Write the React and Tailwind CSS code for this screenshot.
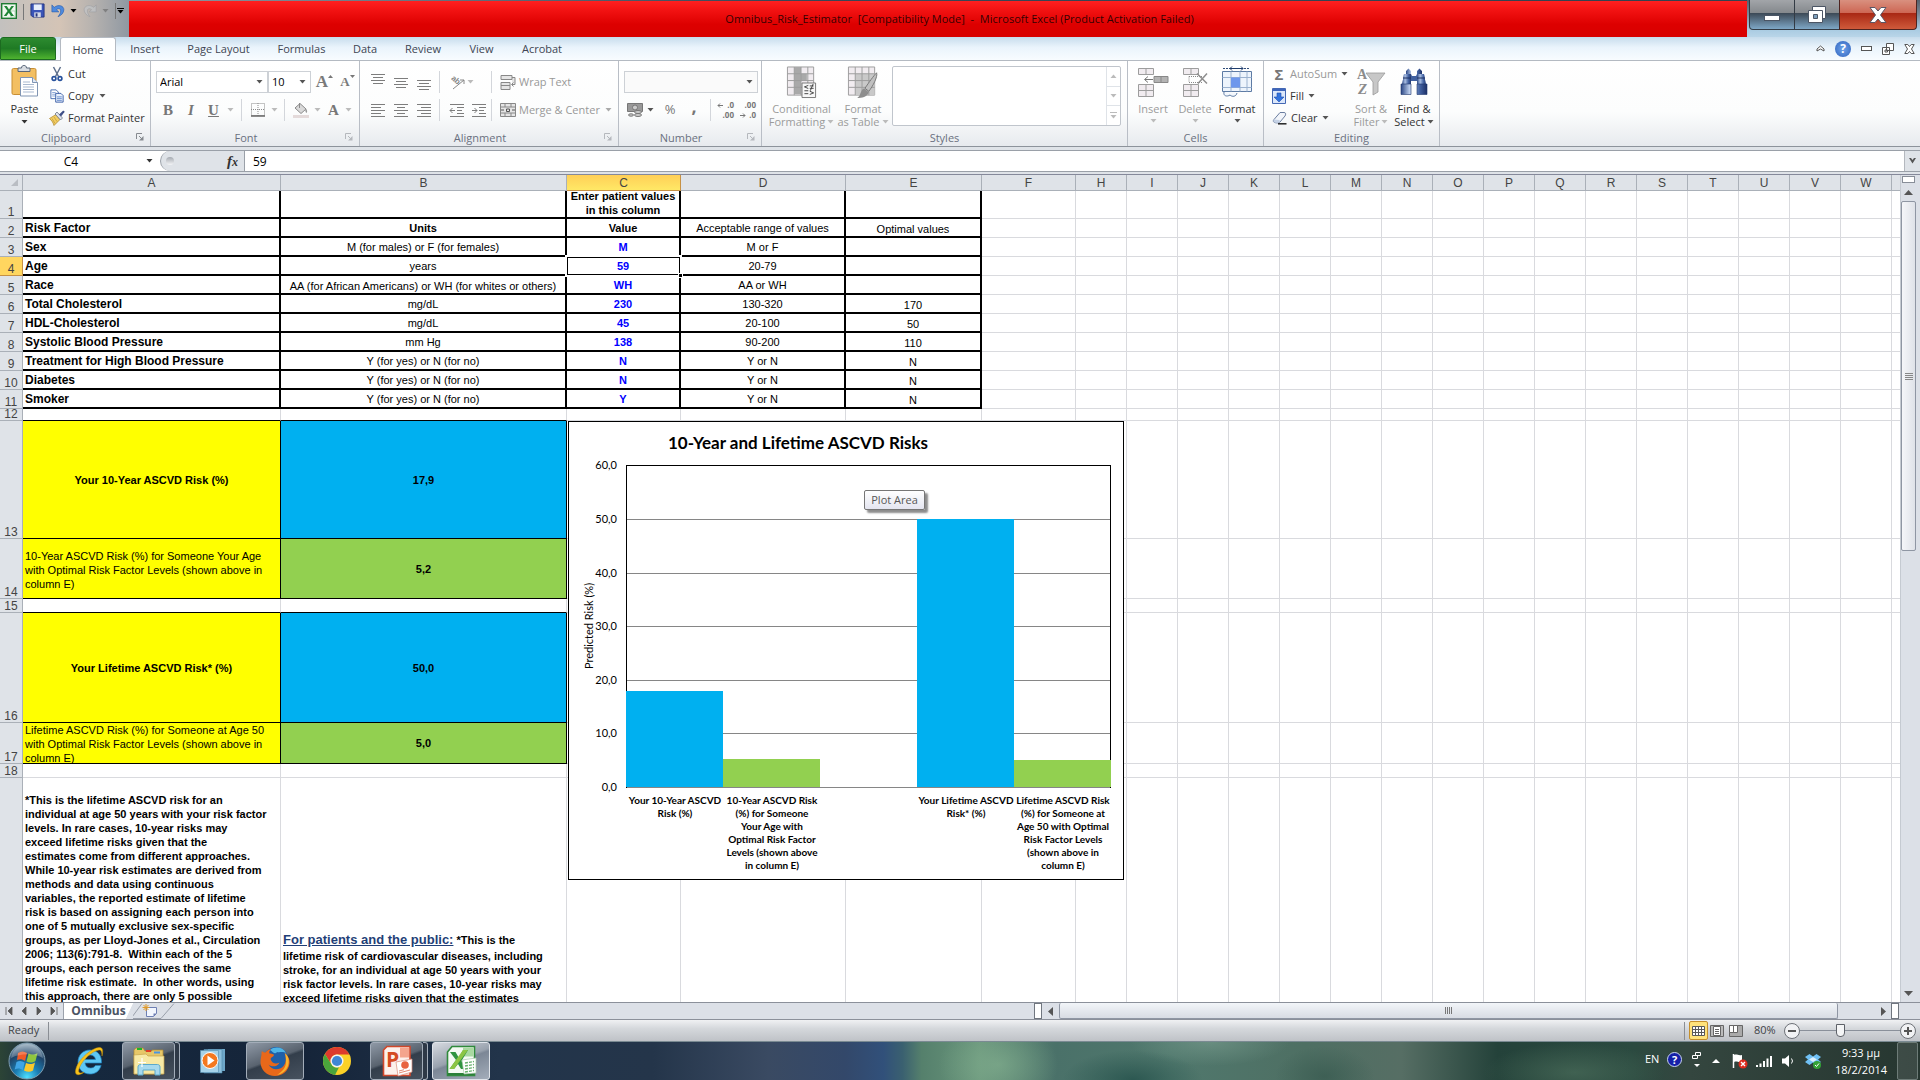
import React from "react";

const ui = "font-['Open_Sans','Noto_Sans',sans-serif]";
const arial = "font-['Liberation_Sans',Arial,sans-serif]";

/* ---------- small shared pieces ---------- */

function Caret({ className = "text-[#555]" }) {
  return (
    <svg viewBox="0 0 7 4" className={`h-1 w-[7px] shrink-0 ${className}`} fill="currentColor" aria-hidden="true">
      <path d="M0.5 0h6L3.5 3.6z" />
    </svg>
  );
}

function Launcher({ dim }) {
  return (
    <button aria-label="Open dialog" className={`absolute right-[6px] bottom-[5px] ${dim ? "text-[#b5b8bd]" : "text-[#85898f]"}`}>
      <svg viewBox="0 0 8 8" className="size-2" fill="none" stroke="currentColor">
        <path d="M0.5 6V0.5H6M3 3l3 3" />
        <path d="M7.5 3v4.5H3z" fill="currentColor" stroke="none" />
      </svg>
    </button>
  );
}

function Group({ label, width, launcher, dim, children }) {
  return (
    <section
      aria-label={label}
      className={`relative flex shrink-0 flex-col border-r border-[#b9bec6] ${width}`}
    >
      <div className="flex h-[68px]">{children}</div>
      <div className={`h-[17px] text-center text-[11px] leading-[17px] text-[#6a7080] ${launcher ? "pr-[18px]" : ""}`}>{label}</div>
      {launcher && <Launcher dim={dim} />}
    </section>
  );
}

function Divider() {
  return <span className="mx-1 h-[22px] w-px bg-[#d3d6db]" />;
}

function Lines({ rows, className = "" }) {
  return (
    <svg viewBox="0 0 16 16" className={`size-4 ${className}`} stroke="#7d7d7d" strokeWidth="1" aria-hidden="true">
      {rows.map(([x1, x2, y]) => (
        <path key={y} d={`M${x1} ${y + 0.5}H${x2}`} />
      ))}
    </svg>
  );
}

function IconButton({ label, children, className = "" }) {
  return (
    <button aria-label={label} title={label} className={`flex h-[22px] items-center justify-center ${className}`}>
      {children}
    </button>
  );
}

function BigButton({ icon, lines, dim, width, caretBelow }) {
  return (
    <button className={`flex flex-col items-center pt-[5px] text-[11px] leading-[13px] ${width} ${dim ? "text-[#9b9b9b]" : "text-[#333]"}`}>
      <span className="flex h-8 items-center justify-center">{icon}</span>
      <span className="mt-1 whitespace-nowrap">{lines[0]}</span>
      {caretBelow ? (
        <Caret className={`mt-1 ${dim ? "text-[#bbb]" : "text-[#555]"}`} />
      ) : (
        <span className="flex items-center gap-[2px] whitespace-nowrap">
          {lines[1]}
          <Caret className={dim ? "text-[#bbb]" : "text-[#555]"} />
        </span>
      )}
    </button>
  );
}

/* ---------- icons ---------- */

function ExcelLogo({ className }) {
  return (
    <svg viewBox="0 0 32 32" className={className} aria-hidden="true">
      <path d="M7 1.5h22.5v29H2.5V7z" fill="#f4faf3" stroke="#2f8a3c" strokeWidth="1.6" />
      <path d="M18 2.5h10.5v9H18z" fill="#a8d9a0" />
      <path d="M3 29h26" stroke="#2b7f38" strokeWidth="2" />
      <path d="M5 7h5.500l3.500 6 4-8h5l-6.500 11 5.500 8h-6l-3-5-4 5H4.500L11 15z" fill="#2f9440" />
      <path d="M18 5h5L9 24H4.500z" fill="#8cc544" />
      <path d="M17 15l14-2v15l-12 1z" fill="#fff" stroke="#a9c9ac" strokeWidth=".7" />
      <path d="M20 18l9-1.500M20 21l9-1.500M20 24l9-1.500M20 27l9-1.500" stroke="#66b06c" strokeWidth="1.300" strokeDasharray="3 1" />
    </svg>
  );
}

function SmallExcel() {
  return (
    <svg viewBox="0 0 16 16" className="size-4" aria-hidden="true">
      <rect x=".7" y=".7" width="14.600" height="14.600" fill="#eef7ee" stroke="#1e7b33" strokeWidth="1.400" />
      <path d="M10 8h4v6h-4z" fill="#fff" stroke="#8fc393" strokeWidth=".6" />
      <path d="M3 3h2.800L8 6.500 10.500 3H13L9.300 8 13 13h-3L7.800 9.700 5.500 13H2.800l3.800-5z" fill="#1f8636" />
    </svg>
  );
}

function SaveIcon() {
  return (
    <svg viewBox="0 0 16 16" className="size-[15px]" aria-hidden="true">
      <path d="M1 1h14v14H3l-2-2z" fill="#3b55b8" stroke="#26357f" />
      <path d="M4 1.500h8.500v6H4z" fill="#e8eefb" />
      <path d="M4.500 10h7v5h-7z" fill="#d5d9e6" />
      <path d="M6 11h2v3.500H6z" fill="#26357f" />
    </svg>
  );
}

function UndoIcon({ flip, color }) {
  return (
    <svg viewBox="0 0 16 16" className={`h-4 w-[14px] ${flip ? "-scale-x-100" : ""}`} aria-hidden="true">
      <path d="M1 1v8h8L6.200 6.500C8.500 4.500 11 5 11 8c0 2-1 4-3 6.500 4-1.500 6.700-4.500 6.700-8C14.700 2 8.500 0 3.700 3.800z" fill={color} stroke={flip ? "#8d939b" : "#2c5da8"} strokeWidth=".7" />
    </svg>
  );
}

function PasteIcon() {
  return (
    <svg viewBox="0 0 28 32" className="h-8 w-7" aria-hidden="true">
      <rect x="1" y="3.500" width="24" height="26" rx="1.500" fill="#f3bf62" stroke="#c88f35" />
      <path d="M7 6.500V3h3.500c0-3.500 5-3.500 5 0H19v3.500z" fill="#d9dde2" stroke="#596679" />
      <path d="M9.500 12.500h12l5 5V31h-17z" fill="#fff" stroke="#8095b3" />
      <path d="M21.500 12.500v5h5" fill="#dfe8f5" stroke="#8095b3" />
      <path d="M12 17h7M12 19.500h11M12 22h11M12 24.500h11M12 27h11" stroke="#a9b9d0" />
    </svg>
  );
}

function CutIcon() {
  return (
    <svg viewBox="0 0 12 16" className="h-4 w-3" fill="none" aria-hidden="true">
      <path d="M2.500 1l5 9.500M9.500 1l-5 9.500" stroke="#5d6f8c" strokeWidth="1.500" />
      <circle cx="3" cy="12.500" r="1.900" stroke="#27519c" strokeWidth="1.600" />
      <circle cx="9" cy="12.500" r="1.900" stroke="#27519c" strokeWidth="1.600" />
    </svg>
  );
}

function CopyIcon() {
  return (
    <svg viewBox="0 0 16 16" className="h-[14px] w-4" aria-hidden="true">
      <path d="M1 1h6l2.500 2.500V11H1z" fill="#fff" stroke="#3c63ac" />
      <path d="M2.500 4h4M2.500 6h4M2.500 8h4" stroke="#7f9fd3" />
      <path d="M6.500 5h6L15 7.500V15H6.500z" fill="#e9f1fd" stroke="#2f55a0" />
      <path d="M8 9h5.500M8 11h5.500M8 13h5.500" stroke="#5f86c8" />
    </svg>
  );
}

function BrushIcon() {
  return (
    <svg viewBox="0 0 16 16" className="size-4" aria-hidden="true">
      <path d="M.5 8.500L7 4.500l4 5L5 15.500C4 12 2.500 10.500.5 8.500z" fill="#f3ce62" stroke="#a9812a" strokeWidth=".7" />
      <path d="M6 4l2-2 5.500 6-2 2z" fill="#dfe3ea" stroke="#59647a" strokeWidth=".7" />
      <path d="M10 4.500L14 .8c1-.6 2 .6 1.300 1.500L12 6.500z" fill="#3f4f87" />
      <path d="M3 8.500l3 5M5 7l3 4.500" stroke="#b48c2f" strokeWidth=".6" />
    </svg>
  );
}

function BorderIcon() {
  return (
    <svg viewBox="0 0 14 14" className="size-[14px]" fill="none" stroke="#8b8b8b" aria-hidden="true">
      <path d="M.5 .5h13v12H.5zM7 0v13M0 6.500h14" strokeDasharray="1 1" />
      <path d="M0 13h14" stroke="#666" strokeWidth="1.500" />
    </svg>
  );
}

function BucketIcon() {
  return (
    <svg viewBox="0 0 16 16" className="size-4" aria-hidden="true">
      <path d="M2 6l5-4.500 6 5.500-5 4.500z" fill="#d9d9d9" stroke="#8a8a8a" />
      <path d="M6.500 6V1" stroke="#8a8a8a" />
      <path d="M12.500 6c2 2 2 4 1 5-1.200-.5-1.500-3-1-5z" fill="#999" />
      <path d="M0 13h16v3H0z" fill="#e4dada" />
    </svg>
  );
}

function GridIcon({ accent, brush }) {
  return (
    <svg viewBox="0 0 32 34" className="h-[33px] w-8" aria-hidden="true">
      <path d="M1 1h27v29H1z" fill="#f1ecf0" stroke="#9d9d9d" />
      {brush ? <path d="M8 8h20v22H8z" fill="#c9c9c9" /> : <path d="M8 1h7v7h6v7h-6v14H8z" fill="#a9a9a9" />}
      <path d="M8 1v29M15 1v29M22 1v29M1 8h27M1 15h27M1 22h27" stroke="#9d9d9d" />
      {accent && (
        <g>
          <path d="M16 17.500h14v15H16z" fill="#f7f7f7" stroke="#777" />
          <path d="M18.500 21.500l4-1.500M18.500 21.500l4 1.700M18.500 25.500h4M24 20.500h4M24 23h4M27.500 18.500l-3 7M24 26l4 1.700-4 1.600M18.500 28.500h4" stroke="#444" fill="none" />
        </g>
      )}
      {brush && (
        <g>
          <path d="M30 7c1.500 4-4 14-8 19l-4-3c4-6 9-13 12-16z" fill="#c0c0c0" stroke="#777" />
          <path d="M17 23l5 4c-2 5-7 6-12 6 4-2 3-8 7-10z" fill="#8d8d8d" />
        </g>
      )}
    </svg>
  );
}

function InsertIcon() {
  return (
    <svg viewBox="0 0 31 30" className="h-[30px] w-[31px]" fill="#f1ecf0" stroke="#9d9d9d" aria-hidden="true">
      <path d="M.5 1.500h15v6H.5zM8 1.500v6M.5 17.500h15v12H.5zM8 17.500v12M.5 23.500h15" />
      <path d="M16 9.500h14v6H16zM23 9.500v6" fill="#b3b3b3" stroke="#888" />
      <path d="M7 12.500h8M10 9.500l-3.500 3 3.500 3" fill="none" stroke="#777" />
    </svg>
  );
}

function DeleteIcon() {
  return (
    <svg viewBox="0 0 25 30" className="h-[30px] w-[25px]" fill="#f1ecf0" stroke="#9d9d9d" aria-hidden="true">
      <path d="M.5 1.500h15v6H.5zM8 1.500v6M.5 17.500h15v12H.5zM8 17.500v12M.5 23.500h15" />
      <path d="M6 9.500h13M6 9.500v6h13" fill="none" stroke="#888" strokeDasharray="1 1" />
      <path d="M14 6.500l10 10M24 6.500l-9 10" fill="none" stroke="#8e8e8e" strokeWidth="1.500" />
    </svg>
  );
}

function FormatIcon() {
  return (
    <svg viewBox="0 0 32 32" className="size-8" aria-hidden="true">
      <path d="M2 2.500h26" stroke="#2f4c78" strokeDasharray="2 1" />
      <path d="M9 2.500h13M11 .5L9 2.500l2 2M20 .5l2 2-2 2" stroke="#1e3c6c" fill="none" />
      <path d="M1.500 5.500h29v20h-29z" fill="#edf4fc" stroke="#5d7ba4" />
      <path d="M10 5.500v20M19 5.500v20M26 5.500v20M1.500 11.500h29M1.500 21.500h29" stroke="#9bb2cf" />
      <path d="M10 11.500h9v10h-9z" fill="#6d97ec" />
      <path d="M3 26c-1 4 3 5 6 3 2 2 6 2 7-2" fill="#f4f8fd" stroke="#5d7ba4" />
    </svg>
  );
}

function SortIcon() {
  return (
    <svg viewBox="0 0 30 32" className="h-8 w-[30px]" aria-hidden="true">
      <path d="M10 7h19L22 16v10l-5 3V16z" fill="#c7c7c7" stroke="#999" strokeWidth=".8" />
      <text x="1" y="13" fontFamily="Liberation Serif" fontWeight="700" fontSize="14" fill="#8b8b8b">A</text>
      <text x="2" y="28" fontFamily="Liberation Serif" fontWeight="700" fontStyle="italic" fontSize="15" fill="#8b8b8b">Z</text>
    </svg>
  );
}

function Binoculars() {
  return (
    <svg viewBox="0 0 28 28" className="size-7" aria-hidden="true">
      <defs>
        <linearGradient id="bino" x1="0" x2="1">
          <stop offset="0" stopColor="#2a4684" />
          <stop offset=".35" stopColor="#c4d6f3" />
          <stop offset=".7" stopColor="#4868a8" />
          <stop offset="1" stopColor="#1b2f66" />
        </linearGradient>
      </defs>
      <path d="M6 3l2.500-2.500L11 3v4H6zM17 3l2.500-2.500L22 3v4h-5z" fill="url(#bino)" />
      <path d="M4 6h7l1 2h4l1-2h7l2 11h-9v-4h-6v4H2z" fill="#40609f" />
      <path d="M4 6h7v11H2z" fill="url(#bino)" opacity=".8" />
      <path d="M17 6h7l2 11h-9z" fill="url(#bino)" opacity=".8" />
      <path d="M1 16h10v10.500H1zM17 16h10v10.500H17z" fill="url(#bino)" stroke="#20386d" strokeWidth=".6" />
      <path d="M3 10h8M17 10h8" stroke="#1c3062" />
    </svg>
  );
}

function FillIcon() {
  return (
    <svg viewBox="0 0 14 16" className="h-4 w-[14px]" aria-hidden="true">
      <path d="M.5 .5h13v15H.5z" fill="#dbe7fa" stroke="#4468b4" />
      <path d="M1 1h12v2H1z" fill="#3f66bb" />
      <path d="M5 5h4v4h3l-5 5-5-5h3z" fill="#3273dd" stroke="#1e4fae" strokeWidth=".6" />
    </svg>
  );
}

function EraserIcon() {
  return (
    <svg viewBox="0 0 15 14" className="h-[14px] w-[15px]" aria-hidden="true">
      <path d="M8 1.500h4c2 0 2 2 1 3.500L8 11c-1 1-2.500 1-4 .8C1 11.500.8 9.800 2 8.500z" fill="#f2f5fa" stroke="#6a7d9f" />
      <path d="M2 8.500l5.500.5L8 11c-1.500 1.200-6 1-6.500-.5z" fill="#c5d2e6" />
      <path d="M6 12.800h8.500" stroke="#222" strokeWidth="1.500" />
    </svg>
  );
}

/* ---------- title bar and tabs ---------- */

function TitleBar() {
  return (
    <header className="flex h-[37px] bg-[linear-gradient(90deg,#c3c1bf_0,#d4c4b6_60px,#b9b4b0_90px,#8f98a2_129px,#3a4656_40%,#32424f_90%,#59707f_100%)]">
      <div className="flex w-[129px] shrink-0 items-start gap-[6px] pt-[3px] pl-[1px]">
        <SmallExcel />
        <span className="mt-px h-4 w-px bg-[#777]" />
        <button aria-label="Save"><SaveIcon /></button>
        <button aria-label="Undo" className="flex items-center gap-[5px]"><UndoIcon color="#4f8ade" /><Caret className="text-black" /></button>
        <button aria-label="Redo" className="flex items-center gap-[5px] opacity-60"><UndoIcon flip color="#c4c8cc" /><Caret className="text-[#666]" /></button>
        <button aria-label="Customize Quick Access Toolbar" className="flex h-4 flex-col items-center justify-center gap-px border-l border-[#777] pl-px">
          <span className="h-px w-[7px] bg-black" />
          <Caret className="text-black" />
        </button>
      </div>
      <h1 className="mt-px flex-1 bg-[linear-gradient(#ff2020,#f01010_30%,#dd0000_65%,#d80000)] pl-[43px] text-center text-[11px] leading-[36px] font-normal whitespace-pre text-black/80">
        {"Omnibus_Risk_Estimator  [Compatibility Mode]  -  Microsoft Excel (Product Activation Failed)"}
      </h1>
      <div className="flex w-[173px] shrink-0 bg-[linear-gradient(#56606b,#7c8c9b_40%,#a9cbe2_80%,#b9d5e8)] pl-[2px]">
        <button aria-label="Minimize" className="flex h-[30px] w-[46px] items-end justify-center rounded-bl-[4px] border border-t-0 border-[#333b44] bg-[linear-gradient(#a2a5a9,#84888c_45%,#3d4a57_46%,#7ea7c6)] pb-[8px]">
          <span className="h-[6px] w-4 border border-[#4b5564] bg-white" />
        </button>
        <button aria-label="Restore" className="flex h-[30px] w-[44px] items-center justify-center border-b border-[#333b44] bg-[linear-gradient(#a2a5a9,#84888c_45%,#3d4a57_46%,#7ea7c6)]">
          <svg viewBox="0 0 20 18" className="h-[18px] w-5" stroke="#4b5564" fill="#fff">
            <path d="M5.500 .5h13v12h-13z" />
            <path d="M1.500 4.500h14v12h-14z" />
            <path d="M6.500 8.500h4v4h-4z" fill="#7ea0bd" />
          </svg>
        </button>
        <button aria-label="Close" className="flex h-[30px] w-[78px] items-center justify-center rounded-br-[4px] border border-t-0 border-[#4e2420] bg-[linear-gradient(#d9907f,#cd6653_45%,#a92814_46%,#cf5a3b)]">
          <svg viewBox="0 0 18 16" className="h-4 w-[18px]" aria-hidden="true">
            <path d="M1 .5h5L9 4l3-3.500h5L11.500 8l5.500 7.500h-5L9 12l-3 3.500H1L6.500 8z" fill="#fff" stroke="#5b5664" />
          </svg>
        </button>
      </div>
    </header>
  );
}

function Tabs() {
  const tabs = [
    ["Insert", "w-[58px]"],
    ["Page Layout", "w-[89px]"],
    ["Formulas", "w-[77px]"],
    ["Data", "w-[50px]"],
    ["Review", "w-[66px]"],
    ["View", "w-[51px]"],
    ["Acrobat", "w-[70px]"],
  ];
  return (
    <nav className="flex h-6 items-stretch border-b border-[#b4bac2] bg-[linear-gradient(#c7dcec,#eaf4fc_45%,#f8fcff)] text-[11px] text-[#404552]">
      <button className="w-14 rounded-t-[3px] border border-[#1c6b20] bg-[linear-gradient(#2d8b30,#1f7a24_50%,#4eb32f)] pt-px text-white">File</button>
      <button className="-mb-px ml-1 w-14 rounded-t-[3px] border border-b-0 border-[#b4bac2] bg-white pt-px">Home</button>
      {tabs.map(([t, w]) => (
        <button key={t} className={`pt-[2px] text-center whitespace-nowrap ${w}`}>{t}</button>
      ))}
      <div className="ml-auto flex items-center gap-[10px] pr-[5px]">
        <button aria-label="Minimize the Ribbon">
          <svg viewBox="0 0 9 8" className="h-2 w-[9px]" fill="#fff" stroke="#555"><path d="M1 6V4l3.500-3L8 4v2L4.500 4z" /></svg>
        </button>
        <button aria-label="Help" className="flex size-4 items-center justify-center rounded-full bg-[radial-gradient(#6fa4ea,#2f62bd)] text-[12px] leading-none font-bold text-white">?</button>
        <button aria-label="Minimize workbook" className="h-[5px] w-[11px] border border-[#555] bg-white" />
        <button aria-label="Restore workbook">
          <svg viewBox="0 0 12 12" className="size-3" fill="#fff" stroke="#555"><path d="M4.500 .5h7v7h-7zM.5 4.500h7v7h-7zM3 7h2.500v2H3z" /></svg>
        </button>
        <button aria-label="Close workbook">
          <svg viewBox="0 0 11 10" className="h-[10px] w-[11px]" fill="#fff" stroke="#555"><path d="M.8 .5h3l1.700 2 1.700-2h3L7.500 5l2.700 4.500h-3l-1.700-2-1.700 2h-3L3.500 5z" /></svg>
        </button>
      </div>
    </nav>
  );
}

/* ---------- ribbon ---------- */

function Combo({ label, value, width, disabled }) {
  return (
    <label className={`relative flex h-[22px] items-center border border-[#cdd1d6] ${disabled ? "bg-[#fafafa]" : "bg-white"} ${width}`}>
      <select aria-label={label} className="h-full w-full appearance-none bg-transparent pl-[3px] text-[11px] text-black outline-none">
        <option>{value}</option>
      </select>
      <span className="pointer-events-none absolute right-1"><Caret /></span>
    </label>
  );
}

function Ribbon() {
  return (
    <div className="flex h-[86px] border-b border-[#8d939b] bg-[linear-gradient(#ffffff,#fcfdfd_60%,#e7eaee)]">
      <Group label="Clipboard" width="w-[151px]" launcher>
        <button className="flex w-[49px] shrink-0 flex-col items-center pt-1 text-[11px] leading-[13px] text-[#333]">
          <PasteIcon />
          <span className="mt-[5px]">Paste</span>
          <Caret className="mt-[5px]" />
        </button>
        <div className="flex flex-col text-[11px] text-[#333]">
          <button className="flex h-[22px] items-center gap-[5px] pt-1 pl-[2px]"><CutIcon />Cut</button>
          <button className="flex h-[22px] items-center gap-[3px] pt-1"><CopyIcon />Copy<Caret className="ml-[2px] text-[#555]" /></button>
          <button className="flex h-[22px] items-center gap-[3px] pt-1 whitespace-nowrap"><BrushIcon />Format Painter</button>
        </div>
      </Group>

      <Group label="Font" width="w-[209px]" launcher dim>
        <div className="flex flex-col pl-[5px]">
          <div className="mt-[10px] flex items-center">
            <Combo label="Font" value="Arial" width="w-[112px]" />
            <Combo label="Font size" value="10" width="w-[43px]" />
            <IconButton label="Grow Font" className="ml-1 w-[19px] font-['Liberation_Serif',serif] text-[17px] font-bold text-[#7a7a7a]">
              A<svg viewBox="0 0 5 3" className="mb-3 h-[3px] w-[5px]" fill="#777"><path d="M0 3h5L2.500 0z" /></svg>
            </IconButton>
            <IconButton label="Shrink Font" className="ml-1 w-[19px] font-['Liberation_Serif',serif] text-[13px] font-bold text-[#7a7a7a]">
              A<svg viewBox="0 0 5 3" className="mb-3 h-[3px] w-[5px]" fill="#777"><path d="M0 0h5L2.500 3z" /></svg>
            </IconButton>
          </div>
          <div className="mt-[6px] flex items-center font-['Liberation_Serif',serif] text-[15px] text-[#777]">
            <IconButton label="Bold" className="w-6 font-bold">B</IconButton>
            <IconButton label="Italic" className="w-[22px] font-bold italic">I</IconButton>
            <IconButton label="Underline" className="ml-[3px] w-[32px] gap-2 font-bold underline">U<Caret className="text-[#bbb]" /></IconButton>
            <Divider />
            <IconButton label="Borders" className="ml-[2px] w-8 gap-[6px]"><BorderIcon /><Caret className="text-[#bbb]" /></IconButton>
            <Divider />
            <IconButton label="Fill Color" className="ml-[2px] w-8 gap-[5px]"><BucketIcon /><Caret className="text-[#bbb]" /></IconButton>
            <IconButton label="Font Color" className="ml-[2px] w-[30px] gap-[6px] font-bold">A<Caret className="text-[#bbb]" /></IconButton>
          </div>
        </div>
      </Group>

      <Group label="Alignment" width="w-[259px]" launcher dim>
        <div className="flex flex-col pl-[6px]">
          <div className="mt-[10px] flex items-center">
            <IconButton label="Top Align" className="w-[23px]"><Lines className="mb-1" rows={[[1, 15, 2], [3, 13, 5], [1, 15, 8], [3, 13, 11]]} /></IconButton>
            <IconButton label="Middle Align" className="w-[23px]"><Lines rows={[[1, 15, 4], [3, 13, 7], [1, 15, 10], [3, 13, 13]]} /></IconButton>
            <IconButton label="Bottom Align" className="w-[23px]"><Lines rows={[[1, 15, 6], [3, 13, 9], [1, 15, 12], [3, 13, 15]]} /></IconButton>
            <Divider />
            <IconButton label="Orientation" className="ml-1 w-[26px] gap-[2px]">
              <svg viewBox="0 0 16 16" className="size-4" aria-hidden="true">
                <text x="2" y="8" transform="rotate(40 6 6)" fontSize="8" fontWeight="700" fontFamily="Liberation Sans" fill="#888">ab</text>
                <path d="M4 15L15 6M11 6h4v4" stroke="#888" fill="none" />
              </svg>
              <Caret className="text-[#bbb]" />
            </IconButton>
            <span className="ml-[17px] h-[22px] w-px bg-[#d3d6db]" />
            <button className="ml-[8px] flex items-center gap-[3px] text-[11px] text-[#999]">
              <svg viewBox="0 0 16 16" className="size-4" fill="#e5e5e5" stroke="#888"><path d="M1 1.500h11v4H1zM1 8.500h9v7H1zM1 11.500h9M12 3.500h3v7h-3M13.500 8.500l-2 2 2 2" /></svg>
              Wrap Text
            </button>
          </div>
          <div className="mt-[6px] flex items-center">
            <IconButton label="Align Left" className="w-[23px]"><Lines rows={[[1, 15, 2], [1, 11, 5], [1, 15, 8], [1, 11, 11], [1, 15, 14]]} /></IconButton>
            <IconButton label="Center" className="w-[23px]"><Lines rows={[[1, 15, 2], [4, 12, 5], [1, 15, 8], [4, 12, 11], [1, 15, 14]]} /></IconButton>
            <IconButton label="Align Right" className="w-[23px]"><Lines rows={[[1, 15, 2], [5, 15, 5], [1, 15, 8], [5, 15, 11], [1, 15, 14]]} /></IconButton>
            <Divider />
            <IconButton label="Decrease Indent" className="ml-[2px] w-[22px]">
              <svg viewBox="0 0 16 16" className="size-4" fill="none" stroke="#7d7d7d"><path d="M1 2.500h14M8 5.500h7M8 8.500h5M8 11.500h7M1 14.500h14M1 8.500h5M3.500 6L1 8.500 3.500 11" /></svg>
            </IconButton>
            <IconButton label="Increase Indent" className="w-[22px]">
              <svg viewBox="0 0 16 16" className="size-4" fill="none" stroke="#7d7d7d"><path d="M1 2.500h14M8 5.500h7M8 8.500h5M8 11.500h7M1 14.500h14M1 8.500h5M3.500 6L6 8.500 3.500 11" /></svg>
            </IconButton>
            <span className="ml-[1px] h-[22px] w-px bg-[#d3d6db]" />
            <button className="ml-[8px] flex items-center gap-[3px] text-[11px] whitespace-nowrap text-[#999]">
              <svg viewBox="0 0 16 16" className="size-4" fill="#e5e5e5" stroke="#888"><path d="M.5 1.500h15v13H.5zM.5 5h15M.5 11h15M5 1.500V5M11 1.500V5M5 11v3.500M11 11v3.500" /><path d="M1 8h3M12 8h3M6.500 7h3v2.500h-3z" stroke="#555" /></svg>
              Merge &amp; Center
              <Caret className="ml-[2px] text-[#aaa]" />
            </button>
          </div>
        </div>
      </Group>

      <Group label="Number" width="w-[143px]" launcher dim>
        <div className="flex flex-col pl-[5px]">
          <div className="mt-[10px]"><Combo label="Number Format" value="" width="w-[134px]" disabled /></div>
          <div className="mt-[6px] flex items-center text-[#777]">
            <IconButton label="Accounting Number Format" className="ml-[3px] w-[27px] gap-[4px]">
              <svg viewBox="0 0 16 16" className="size-4" fill="#ccc" stroke="#777"><path d="M.5 1.500h15v8H.5z" fill="#999" /><circle cx="8" cy="5.500" r="2.500" /><ellipse cx="11" cy="10" rx="3.500" ry="1.500" /><ellipse cx="11" cy="13" rx="3.500" ry="1.500" /><ellipse cx="4" cy="13" rx="2.500" ry="1.200" /></svg>
              <Caret />
            </IconButton>
            <IconButton label="Percent Style" className="ml-[8px] w-4 text-[13px]">%</IconButton>
            <IconButton label="Comma Style" className="ml-[8px] w-4 pb-2 text-[18px] font-bold">,</IconButton>
            <span className="ml-2 h-[22px] w-px bg-[#d3d6db]" />
            <IconButton label="Increase Decimal" className="ml-[6px] w-[18px]">
              <svg viewBox="0 0 18 20" className="h-5 w-[18px]" fill="#777" fontFamily="Open Sans, sans-serif" fontSize="8" fontWeight="700">
                <path d="M1 5.500h5M3 3.500l-2 2 2 2" fill="none" stroke="#777" />
                <text x="17" y="8" textAnchor="end">.0</text>
                <text x="17" y="18" textAnchor="end">.00</text>
              </svg>
            </IconButton>
            <IconButton label="Decrease Decimal" className="ml-[4px] w-[18px]">
              <svg viewBox="0 0 18 20" className="h-5 w-[18px]" fill="#777" fontFamily="Open Sans, sans-serif" fontSize="8" fontWeight="700">
                <text x="17" y="8" textAnchor="end">.00</text>
                <path d="M1 15.500h5M4 13.500l2 2-2 2" fill="none" stroke="#777" />
                <text x="17" y="18" textAnchor="end">.0</text>
              </svg>
            </IconButton>
          </div>
        </div>
      </Group>

      <Group label="Styles" width="w-[366px]">
        <div className="flex pl-[5px]">
          <BigButton dim width="w-[69px]" icon={<GridIcon accent />} lines={["Conditional", "Formatting"]} />
          <BigButton dim width="w-[54px]" icon={<GridIcon brush />} lines={["Format", "as Table"]} />
          <div className="mt-[5px] ml-[2px] flex h-[60px] w-[229px] rounded-[2px] border border-[#c0c5cc] bg-white">
            <div className="flex-1" />
            <div className="flex w-[14px] flex-col divide-y divide-[#dfe3e8] border-l border-[#dfe3e8]">
              <button aria-label="Previous styles" className="flex flex-1 items-center justify-center"><Caret className="rotate-180 text-[#bbb]" /></button>
              <button aria-label="Next styles" className="flex flex-1 items-center justify-center"><Caret className="text-[#bbb]" /></button>
              <button aria-label="More styles" className="flex flex-1 flex-col items-center justify-center gap-[2px]"><span className="h-px w-[7px] bg-[#bbb]" /><Caret className="text-[#bbb]" /></button>
            </div>
          </div>
        </div>
      </Group>

      <Group label="Cells" width="w-[136px]">
        <div className="flex pl-1">
          <BigButton dim caretBelow width="w-[42px]" icon={<InsertIcon />} lines={["Insert"]} />
          <BigButton dim caretBelow width="w-[42px]" icon={<DeleteIcon />} lines={["Delete"]} />
          <BigButton caretBelow width="w-[42px]" icon={<FormatIcon />} lines={["Format"]} />
        </div>
      </Group>

      <Group label="Editing" width="w-[176px]">
        <div className="flex w-[86px] flex-col pl-2 text-[11px] text-[#333]">
          <button className="flex h-[22px] items-center gap-1 pt-1 text-[#999]"><span className="w-[14px] text-[15px] font-bold text-[#777]">Σ</span>AutoSum<Caret /></button>
          <button className="flex h-[22px] items-center gap-1 pt-1"><FillIcon />Fill<Caret /></button>
          <button className="flex h-[22px] items-center gap-1 pt-1"><EraserIcon />Clear<Caret /></button>
        </div>
        <div className="flex">
          <BigButton dim width="w-[42px]" icon={<SortIcon />} lines={["Sort &", "Filter"]} />
          <BigButton width="w-[44px]" icon={<Binoculars />} lines={["Find &", "Select"]} />
        </div>
      </Group>
    </div>
  );
}

function FormulaBar() {
  return (
    <div className="bg-[#dfe3e8] pt-[3px] pb-[2px]">
      <div className="flex h-[22px] border-y border-[#9aa0a8] bg-white text-[12px]">
        <label className="relative flex w-[160px] items-center">
          <input aria-label="Name Box" defaultValue="C4" className="h-full w-[142px] bg-transparent text-center text-black outline-none" />
          <Caret className="ml-1 text-[#333]" />
        </label>
        <div className="flex w-[85px] items-center rounded-l-full border-r border-l border-[#9aa0a8] bg-[#dfe3e8] pr-[6px] pl-[5px]">
          <span className="size-2 rounded-full bg-[linear-gradient(#a5aab1,#f4f5f7)]" />
          <button aria-label="Insert Function" className="ml-auto font-['Liberation_Serif',serif] text-[15px] leading-none font-bold text-[#333] italic">
            f<span className="text-[12px]">x</span>
          </button>
        </div>
        <input aria-label="Formula" defaultValue="59" className="h-full min-w-0 flex-1 bg-transparent pl-2 text-black outline-none" />
        <button aria-label="Expand Formula Bar" className="flex w-4 items-center justify-center border-l border-[#b4b8be] bg-[#dfe3e8]">
          <svg viewBox="0 0 7 6" className="h-[6px] w-[7px]" fill="#555"><path d="M0 0h2l1.500 2L5 0h2L3.500 5.500z" /></svg>
        </button>
      </div>
    </div>
  );
}

/* ---------- worksheet ---------- */

const COLS = [
  ["A", "w-[258px]"], ["B", "w-[286px]"], ["C", "w-[114px]"], ["D", "w-[165px]"], ["E", "w-[136px]"], ["F", "w-[94px]"],
  ..."HIJKLMNOPQRSTUVW".split("").map((c) => [c, "w-[51px]"]),
];

const FACTORS = [
  [2, "Risk Factor", "Units", "Value", "Acceptable range of values", "Optimal values"],
  [3, "Sex", "M (for males) or F (for females)", "M", "M or F", ""],
  [4, "Age", "years", "59", "20-79", ""],
  [5, "Race", "AA (for African Americans) or WH (for whites or others)", "WH", "AA or WH", ""],
  [6, "Total Cholesterol", "mg/dL", "230", "130-320", "170"],
  [7, "HDL-Cholesterol", "mg/dL", "45", "20-100", "50"],
  [8, "Systolic Blood Pressure", "mm Hg", "138", "90-200", "110"],
  [9, "Treatment for High Blood Pressure", "Y (for yes) or N (for no)", "N", "Y or N", "N"],
  [10, "Diabetes", "Y (for yes) or N (for no)", "N", "Y or N", "N"],
  [11, "Smoker", "Y (for yes) or N (for no)", "Y", "Y or N", "N"],
];

const thick = "border-r-2 border-b-2 border-black p-0";
const thin = "border-r border-b border-black p-0";
const plain = "border-r border-b border-[#d9dade] p-0";

function RowHead({ n, active }) {
  return (
    <th
      scope="row"
      className={`border-r border-b p-0 text-center align-bottom text-[12px] leading-[11px] font-normal ${
        active ? "border-[#c69145] bg-[#ffd65f] text-[#444]" : "border-[#aab0b8] bg-[#dfe3e8] text-[#444]"
      }`}
    >
      {n}
    </th>
  );
}

function Blank({ from }) {
  return (
    <>
      {COLS.slice(from).map(([c]) => (
        <td key={c} className={plain} />
      ))}
      <td className="border-b border-[#d9dade] p-0" />
    </>
  );
}

function ResultRow({ n, height, label, value, big }) {
  return (
    <tr className={height}>
      <RowHead n={n} />
      <td className={`${thin} bg-[#ffff00] align-middle ${big ? "text-center font-bold" : "text-left"}`}>
        <div className={`leading-[14px] ${big ? "" : "h-10 overflow-visible pl-[2px]"}`}>{label}</div>
      </td>
      <td className={`${thin} text-center align-middle font-bold ${big ? "bg-[#00b0f0]" : "bg-[#92d050]"}`}>{value}</td>
      <Blank from={2} />
    </tr>
  );
}

function Sheet() {
  return (
    <table className="w-full table-fixed border-separate border-spacing-0 text-[11px] leading-[14px] text-black">
      <colgroup>
        <col className="w-[23px]" />
        {COLS.map(([c, w]) => (
          <col key={c} className={w} />
        ))}
        <col />
      </colgroup>
      <thead>
        <tr className="h-4 text-[12px] leading-[14px] text-[#444]">
          <th className="border-r border-b border-[#aab0b8] bg-[#dfe3e8] p-0">
            <svg viewBox="0 0 8 8" className="mr-1 ml-auto size-[7px]" fill="#b9bdc3"><path d="M8 0v8H0z" /></svg>
          </th>
          {COLS.map(([c]) => (
            <th
              key={c}
              scope="col"
              className={`border-r border-b p-0 font-normal ${
                c === "C" ? "border-[#c69145] bg-[linear-gradient(#ffcf57,#ffe866)]" : "border-[#aab0b8] bg-[#dfe3e8]"
              }`}
            >
              {c}
            </th>
          ))}
          <th className="border-b border-[#aab0b8] bg-[#dfe3e8] p-0" />
        </tr>
      </thead>
      <tbody>
        <tr className="h-7">
          <RowHead n={1} />
          <td className={thick} />
          <td className={thick} />
          <td className={`${thick} align-bottom`}>
            <div className="flex h-[26px] flex-col justify-end text-center font-bold whitespace-nowrap">
              <span>Enter patient values</span>
              <span>in this column</span>
            </div>
          </td>
          <td className={thick} />
          <td className={thick} />
          <Blank from={5} />
        </tr>
        {FACTORS.map(([n, factor, units, value, range, optimal]) => (
          <tr key={n} className="h-[19px]">
            <RowHead n={n} active={n === 4} />
            <td className={`${thick} pt-px pl-[2px] text-left text-[12px] leading-[14px] font-bold`}>{factor}</td>
            <td className={`${thick} pt-px text-center whitespace-nowrap ${n === 2 ? "font-bold" : ""} ${n === 5 ? "align-bottom" : ""}`}>{units}</td>
            <td className={`${thick} relative pt-px text-center font-bold ${n === 2 ? "" : "text-[#0000ff]"}`}>
              {value}
              {n === 4 && (
                <span className="absolute -top-[2px] -right-[3px] -bottom-[3px] -left-[2px] z-10 border-2 border-white">
                  <span className="absolute inset-0 border border-black" />
                  <span className="absolute -right-[3px] -bottom-[3px] size-[5px] border border-white bg-black" />
                </span>
              )}
            </td>
            <td className={`${thick} pt-px text-center`}>{range}</td>
            <td className={`${thick} pt-[2px] text-center align-bottom`}>{optimal}</td>
            <Blank from={5} />
          </tr>
        ))}
        <tr className="h-3">
          <RowHead n={12} />
          <td className="border-r border-b border-r-[#d9dade] border-b-black p-0" />
          <td className="border-r border-b border-r-[#d9dade] border-b-black p-0" />
          <Blank from={2} />
        </tr>
        <ResultRow n={13} height="h-[118px]" big label="Your 10-Year ASCVD Risk (%)" value="17,9" />
        <ResultRow n={14} height="h-[60px]" label={<>10-Year ASCVD Risk (%) for Someone Your Age<br />with Optimal Risk Factor Levels (shown above in<br />column E)</>} value="5,2" />
        <tr className="h-[14px]">
          <RowHead n={15} />
          <td className="border-r border-b border-r-[#d9dade] border-b-black p-0" />
          <td className="border-r border-b border-r-[#d9dade] border-b-black p-0" />
          <Blank from={2} />
        </tr>
        <ResultRow n={16} height="h-[110px]" big label="Your Lifetime ASCVD Risk* (%)" value="50,0" />
        <ResultRow n={17} height="h-[41px]" label={<>Lifetime ASCVD Risk (%) for Someone at Age 50<br />with Optimal Risk Factor Levels (shown above in<br />column E)</>} value="5,0" />
        <tr className="h-[14px]">
          <RowHead n={18} />
          <Blank from={0} />
        </tr>
        <tr className="h-[260px]">
          <RowHead />
          <td className={`${plain} pt-[15px] pl-[2px] text-left align-top font-bold whitespace-nowrap`}>
            *This is the lifetime ASCVD risk for an<br />
            individual at age 50 years with your risk factor<br />
            levels. In rare cases, 10-year risks may<br />
            exceed lifetime risks given that the<br />
            estimates come from different approaches.<br />
            While 10-year risk estimates are derived from<br />
            methods and data using continuous<br />
            variables, the reported estimate of lifetime<br />
            risk is based on assigning each person into<br />
            one of 5 mutually exclusive sex-specific<br />
            groups, as per Lloyd-Jones et al., Circulation<br />
            2006; 113(6):791-8.&nbsp; Within each of the 5<br />
            groups, each person receives the same<br />
            lifetime risk estimate.&nbsp; In other words, using<br />
            this approach, there are only 5 possible
          </td>
          <td className={`${plain} pt-[153px] pl-[2px] text-left align-top font-bold whitespace-nowrap`}>
            <div className="leading-[17px]">
              <a href="#public" className="text-[13px] text-[#1f3f77] underline">For patients and the public:</a> *This is the
            </div>
            lifetime risk of cardiovascular diseases, including<br />
            stroke, for an individual at age 50 years with your<br />
            risk factor levels. In rare cases, 10-year risks may<br />
            exceed lifetime risks given that the estimates
          </td>
          <Blank from={2} />
        </tr>
      </tbody>
    </table>
  );
}

/* ---------- chart ---------- */

const BARS = [
  { slot: 0, v: 17.9, c: "#00b0f0", t: ["Your 10-Year ASCVD", "Risk (%)"] },
  { slot: 1, v: 5.2, c: "#92d050", t: ["10-Year ASCVD Risk", "(%) for Someone", "Your Age with", "Optimal Risk Factor", "Levels (shown above", "in column E)"] },
  { slot: 3, v: 50, c: "#00b0f0", t: ["Your Lifetime ASCVD", "Risk* (%)"] },
  { slot: 4, v: 5, c: "#92d050", t: ["Lifetime ASCVD Risk", "(%) for Someone at", "Age 50 with Optimal", "Risk Factor Levels", "(shown above in", "column E)"] },
];

function Chart() {
  const bottom = 365;
  const per = 5.36;
  return (
    <figure className="absolute top-[246px] left-[568px] h-[459px] w-[556px] border border-black bg-white">
      <svg viewBox="0 0 554 457" className="h-full w-full" fontFamily="Lato, sans-serif" role="img" aria-label="10-Year and Lifetime ASCVD Risks">
        <text x="229" y="27" textAnchor="middle" fontSize="17" fontWeight="700">10-Year and Lifetime ASCVD Risks</text>
        <text x="24" y="204" textAnchor="middle" fontSize="11" transform="rotate(-90 24 204)">Predicted Risk (%)</text>
        <rect x="57.500" y="43.500" width="484" height="322" fill="none" stroke="#000" />
        {[0, 10, 20, 30, 40, 50, 60].map((v) => (
          <g key={v}>
            {v < 60 && <path d={`M58 ${Math.round(bottom - v * per) + 0.5}H541`} stroke="#868686" />}
            <text x="48" y={Math.round(bottom - v * per) + 4} textAnchor="end" fontSize="11">{`${v},0`}</text>
          </g>
        ))}
        {BARS.map((b) => (
          <g key={b.slot}>
            <rect x={57 + b.slot * 97} y={Math.round(bottom - b.v * per)} width="97" height={Math.round(b.v * per)} fill={b.c} />
            {b.t.map((line, i) => (
              <text key={line} x={106 + b.slot * 97} y={382 + i * 13} textAnchor="middle" fontSize="10" fontWeight="700">{line}</text>
            ))}
          </g>
        ))}
      </svg>
      <span role="tooltip" className={`absolute top-[68px] left-[295px] h-[20px] w-[61px] rounded-[2px] border border-[#767676] bg-[linear-gradient(#fff,#e4e5f0)] text-center text-[11px] leading-[18px] text-[#575757] shadow-[3px_3px_2px_rgba(0,0,0,0.45)] ${ui}`}>
        Plot Area
      </span>
    </figure>
  );
}

function VScroll() {
  return (
    <div className="flex w-[20px] shrink-0 flex-col items-center border-l border-[#c5cad1] bg-[#dce0e7] pr-1">
      <span className="mt-px h-[7px] w-[13px] border border-[#888e98] bg-white" />
      <button aria-label="Scroll up" className="flex h-[18px] items-center"><svg viewBox="0 0 9 5" className="h-[5px] w-[9px]" fill="#555"><path d="M0 5h9L4.500 0z" /></svg></button>
      <div className="flex h-[350px] w-[15px] items-center justify-center rounded-[2px] border border-[#8f96a3] bg-[linear-gradient(90deg,#f5f6f9,#dfe2e8)]">
        <span className="flex flex-col gap-px">
          <span className="h-px w-2 bg-[#888]" /><span className="h-px w-2 bg-[#888]" /><span className="h-px w-2 bg-[#888]" /><span className="h-px w-2 bg-[#888]" />
        </span>
      </div>
      <button aria-label="Scroll down" className="mt-auto flex h-[18px] items-center"><svg viewBox="0 0 9 5" className="h-[5px] w-[9px]" fill="#555"><path d="M0 0h9L4.500 5z" /></svg></button>
    </div>
  );
}

function SheetTabs() {
  const nav = [
    ["First sheet", "M1 0v8M7 0v8L3 4z"],
    ["Previous sheet", "M6 0v8L2 4z"],
    ["Next sheet", "M2 0v8l4-4z"],
    ["Last sheet", "M1 0v8l4-4zM7 0v8"],
  ];
  return (
    <div className="flex h-[17px] border-t border-[#8b909a] bg-[#dce0e7]">
      <div className="flex w-[63px] items-center justify-between px-[5px]">
        {nav.map(([label, d]) => (
          <button key={label} aria-label={label}>
            <svg viewBox="0 0 8 8" className="size-2" fill="#555" stroke="#555" strokeWidth=".8"><path d={d} /></svg>
          </button>
        ))}
      </div>
      <button className="h-4 w-[70px] border-l border-[#9ba1ab] bg-[linear-gradient(115deg,#fff_90%,transparent_91%)] text-center text-[12px] leading-4 font-bold text-[#4c5464]">Omnibus</button>
      <button aria-label="Insert Worksheet" className="flex w-[44px]">
        <svg viewBox="0 0 44 16" className="h-4 w-[44px]" aria-hidden="true">
          <path d="M-2 15.500L9 .5M28 15.500L41 .5M0 15.500h28" stroke="#9aa0ab" fill="none" />
          <path d="M13.500 4.500h10v6l-3 3h-7z" fill="#f2f6fe" stroke="#6e7fb3" />
          <path d="M23.500 10.500h-3v3z" fill="#6e7fb3" />
          <path d="M13 1v7M9.500 4.500h7M10.500 2l5 5M15.500 2l-5 5" stroke="#e29a26" />
        </svg>
      </button>
      <div className="ml-auto flex w-[886px] items-stretch">
        <span className="w-2 border border-[#70767f] bg-white" />
        <button aria-label="Scroll left" className="flex w-[17px] items-center justify-center"><svg viewBox="0 0 5 9" className="h-[9px] w-[5px]" fill="#555"><path d="M5 0v9L0 4.500z" /></svg></button>
        <div className="flex h-4 w-[779px] items-center justify-center gap-px rounded-[2px] border border-t-0 border-[#8f96a3] bg-[linear-gradient(#f2f5f9,#d8dce3)]">
          <span className="h-[7px] w-px bg-[#777]" /><span className="h-[7px] w-px bg-[#777]" /><span className="h-[7px] w-px bg-[#777]" /><span className="h-[7px] w-px bg-[#777]" />
        </div>
        <button aria-label="Scroll right" className="ml-auto flex w-4 items-center justify-center"><svg viewBox="0 0 5 9" className="h-[9px] w-[5px]" fill="#555"><path d="M0 0v9l5-4.500z" /></svg></button>
        <span className="mr-[21px] w-2 border border-[#70767f] bg-white" />
      </div>
    </div>
  );
}

function StatusBar() {
  return (
    <footer className="flex h-[22px] items-center border-t border-[#8b909a] bg-[linear-gradient(#f0f1f3,#d5d8dc_40%,#bfc2c7)] text-[11px] text-[#3f4347]">
      <span className="w-12 pl-2">Ready</span>
      <span className="h-[18px] w-px bg-[#8a8e94]" />
      <div className="ml-auto flex items-center pr-1">
        <span className="mr-1 h-[18px] w-px bg-[#8a8e94]" />
        <button aria-label="Normal view" className="flex h-[19px] w-[19px] items-center justify-center rounded-[2px] border border-[#c58f2c] bg-[#ffe27a]">
          <svg viewBox="0 0 13 10" className="h-[10px] w-[13px]" fill="#fff" stroke="#5a5a5a"><path d="M.5 .5h12v9H.5zM3.500 .5v9M6.500 .5v9M9.500 .5v9M.5 3.500h12M.5 6.500h12" /></svg>
        </button>
        <button aria-label="Page Layout view" className="ml-[2px]"><svg viewBox="0 0 14 12" className="h-3 w-[14px]" stroke="#666"><path d="M.5 .5h13v11H.5z" fill="#bbb" /><path d="M3.500 1.500h7v9h-7zM5 4.500h4M5 6.500h4M5 8.500h4" fill="#fff" /></svg></button>
        <button aria-label="Page Break Preview" className="ml-[5px]"><svg viewBox="0 0 14 12" className="h-3 w-[14px]" stroke="#666"><path d="M.5 .5h13v11H.5z" fill="#aaa" /><path d="M.5 .5h4v7h-4zM4.500 .5h4v7h-4z" fill="#fff" /></svg></button>
        <span className="ml-[11px] w-[30px]">80%</span>
        <button aria-label="Zoom out" className="flex size-4 items-center justify-center rounded-full border border-[#6d7177] bg-[#f1f2f4]"><span className="h-[2px] w-2 bg-[#555]" /></button>
        <input
          type="range"
          aria-label="Zoom"
          min="0"
          max="100"
          defaultValue="40"
          className="h-4 w-[100px] appearance-none bg-[linear-gradient(#8a909a,#8a909a)] bg-[length:100%_1px] bg-center bg-no-repeat [&::-webkit-slider-thumb]:h-[13px] [&::-webkit-slider-thumb]:w-[9px] [&::-webkit-slider-thumb]:appearance-none [&::-webkit-slider-thumb]:rounded-b-[4px] [&::-webkit-slider-thumb]:border [&::-webkit-slider-thumb]:border-[#5d6168] [&::-webkit-slider-thumb]:bg-[#f4f5f6]"
        />
        <button aria-label="Zoom in" className="flex size-4 items-center justify-center rounded-full border border-[#6d7177] bg-[#f1f2f4]">
          <svg viewBox="0 0 8 8" className="size-2" stroke="#555" strokeWidth="2"><path d="M4 0v8M0 4h8" /></svg>
        </button>
      </div>
    </footer>
  );
}

/* ---------- taskbar ---------- */

function StartOrb() {
  return (
    <svg viewBox="0 0 38 38" className="size-[38px]" aria-hidden="true">
      <defs>
        <radialGradient id="orb" cx=".5" cy=".95" r=".95">
          <stop offset="0" stopColor="#4fe0ff" />
          <stop offset=".35" stopColor="#1b7fb5" />
          <stop offset=".7" stopColor="#1f4468" />
          <stop offset="1" stopColor="#9db4c4" />
        </radialGradient>
      </defs>
      <circle cx="19" cy="19" r="18" fill="url(#orb)" stroke="#7e9db0" />
      <path d="M10 11c3-2 6-2 9 0l-2 8c-3-2-5-2-8-1z" fill="#ee5a28" />
      <path d="M20.500 11.500c3 1.500 6 1.500 9-.5l-2 8c-3 2-6 2-9 .500z" fill="#8fc63e" />
      <path d="M8.500 20c3-1.500 5.500-1 8.200.5l-2 7.500c-3-2-5-2-8-.5z" fill="#3fa5e6" />
      <path d="M18 21c3 1.500 6 1.500 9-.500l-2 8c-3 2-6 1.500-9 0z" fill="#fcc92b" />
      <path d="M3 16C5 6 12 2 19 2s14 4 16 14c-10-5-22-5-32 0z" fill="#fff" opacity=".22" />
    </svg>
  );
}

function IEIcon() {
  return (
    <svg viewBox="0 0 32 32" className="size-8" aria-hidden="true">
      <path d="M17 5c8 0 12 6 11.500 13H12c.3 3 2.500 5 5.500 5 2.200 0 4-1 5-2.600h5.600C26.500 26 22.500 29 17 29 10 29 5 24 5 17S10 5 17 5zm-5 9.500h10.500C22 11.500 20 10 17.200 10c-2.700 0-4.600 1.700-5.200 4.500z" fill="#5ec8f4" stroke="#2083c0" strokeWidth=".7" />
      <path d="M29 11c1-4 1.500-9-3-8.500C19 3 7 13 3.500 22c-2 5.500-1 8.500 3 7.500 1.500-.4 3-1.200 4.500-2.300-5 2-6.500 0-4.500-4.700C9.500 15 19 6 26 5c2-.2 3 1.500 3 6z" fill="#f7c21a" stroke="#c58f06" strokeWidth=".5" />
    </svg>
  );
}

function FolderIcon() {
  return (
    <svg viewBox="0 0 32 30" className="h-[30px] w-8" aria-hidden="true">
      <path d="M1 4l2-2h7l2 3h7V4h11v24H1z" fill="#e7c768" stroke="#b08b32" strokeWidth=".7" />
      <path d="M4 2h5v2H4z" fill="#1fb52a" /><path d="M13 4h5v2h-5z" fill="#e23c26" /><path d="M21 5.500h6v2h-6z" fill="#4a94e0" />
      <path d="M1 9l12-1 2 2h16v18H1z" fill="#f7e9a5" stroke="#c7a54a" strokeWidth=".7" />
      <path d="M5 29V21c0-1.500 1-2.500 2.500-2.500h17c1.500 0 2.500 1 2.500 2.500v8h-5v-5h-12v5z" fill="#a6d9ee" stroke="#5ba9cb" />
      <path d="M9 12v9M5 16.500h8" stroke="#fff" strokeWidth="1.200" />
    </svg>
  );
}

function WmpIcon() {
  return (
    <svg viewBox="0 0 26 26" className="size-[26px]" aria-hidden="true">
      <path d="M8 1h17v22H8z" fill="#6ea7c9" /><path d="M4 1.500h18V25H4z" fill="#8cc0dd" stroke="#4f87a9" strokeWidth=".6" />
      <path d="M.5 2.500h18v22H.5z" fill="#a6d3ea" stroke="#5c94b5" strokeWidth=".7" />
      <circle cx="10" cy="12.500" r="8" fill="#f4781f" stroke="#fff" />
      <path d="M7.500 7.500l7 5-7 5z" fill="#fff" />
    </svg>
  );
}

function FirefoxIcon() {
  return (
    <svg viewBox="0 0 32 32" className="size-8" aria-hidden="true">
      <circle cx="17" cy="14" r="12" fill="#1f5fa8" />
      <path d="M11 5c5-4 13-3 16 3-4-2-6 0-9-1-2 3-4 0-7-2z" fill="#4fb4e6" />
      <path d="M3 6c1 1 2 1.500 3.500 1.500C8 5.500 9.500 4.500 12 4c-1.500 1.500-2 3-1.500 4.500 2 0 4 .5 4.500 1.500-.5 2-3 2-3.500 4 1.500 5 6 5.500 9 3.500-2 5-9 4.500-11 2 3 6 11 6 15 1.500 2.500-3 3-8 1-13C29.500 11 31 15 30.500 18.500 29.500 26 23.500 31 16 31 8 31 1.500 25 1.500 17c0-4 1-6 1-7.500C2.500 8 2.500 7 3 6z" fill="#e8681a" />
      <path d="M26 8c4 4 4.500 8 3 13-2 5-6 8-11 9 6-4 9-8 9-13 .2-3-.2-6-1-9z" fill="#f9b42d" />
    </svg>
  );
}

function ChromeIcon() {
  return (
    <svg viewBox="0 0 30 30" className="size-[30px]" aria-hidden="true">
      <circle cx="15" cy="15" r="14" fill="#fbd127" />
      <path d="M2.900 8A14 14 0 0 1 27.500 8.500H15a6.500 6.500 0 0 0-5.700 9.600z" fill="#dd3b2d" />
      <path d="M2.900 8l6.500 10.200A6.500 6.500 0 0 0 17 21.200L13 28.900A14 14 0 0 1 2.900 8z" fill="#4aa53c" />
      <circle cx="15" cy="15" r="6.500" fill="#f3f3f3" />
      <circle cx="15" cy="15" r="5.100" fill="#3f86d4" />
    </svg>
  );
}

function PptIcon() {
  return (
    <svg viewBox="0 0 32 32" className="size-8" aria-hidden="true">
      <path d="M6 1.500h23v29H2.500V5z" fill="#fdf1ec" stroke="#d0472a" strokeWidth="1.600" />
      <path d="M19 2.500h9v10h-9z" fill="#f4a58d" />
      <text x="5" y="22" fontSize="21" fontWeight="700" fontFamily="Open Sans, sans-serif" fill="#d54b22">P</text>
      <path d="M15 17l16-3v13l-14 4z" fill="#fff" stroke="#d98b78" strokeWidth=".7" />
      <circle cx="24" cy="20" r="3.800" fill="#e8633f" />
      <path d="M18 28l11-3M18 26l5-1.300" stroke="#e38c76" />
    </svg>
  );
}

function TaskButton({ label, children, open, stacked, active }) {
  return (
    <button aria-label={label} className="flex h-[38px] w-[58px] items-stretch">
      <span
        className={`flex items-center justify-center ${stacked ? "w-[53px]" : "w-[58px]"} ${
          active
            ? "rounded-[3px] border border-[#dfe4ea] bg-[linear-gradient(160deg,#d6dae0,#99a2ae_45%,#7c8796_50%,#a3adba)]"
            : open
              ? "rounded-[3px] border border-[#a3adb9] bg-[linear-gradient(160deg,#8f99a6,#59636f_45%,#333e4b_50%,#47525f)]"
              : ""
        }`}
      >
        {children}
      </span>
      {stacked && <span className="w-[5px] rounded-r-[3px] border border-l-0 border-[#a3adb9] bg-[#2e3947]" />}
    </button>
  );
}

function Taskbar() {
  return (
    <div className="flex h-[39px] items-center border-t border-[#7a8a92] bg-[radial-gradient(ellipse_60px_40px_at_52%_60%,rgba(140,185,150,0.5),transparent),radial-gradient(ellipse_70px_30px_at_59%_100%,rgba(30,75,70,0.7),transparent),radial-gradient(ellipse_80px_24px_at_63%_0%,rgba(130,165,150,0.5),transparent),radial-gradient(ellipse_50px_30px_at_69%_90%,rgba(50,85,75,0.6),transparent),radial-gradient(ellipse_90px_30px_at_82%_80%,rgba(80,115,95,0.6),transparent),linear-gradient(90deg,#2c4436_0,#16293f_40px,#152439_300px,#22344a_500px,#24354a_34%,#3a4a62_40%,#33486a_44%,#31507a_46%,#3a6070_47%,#55806c_48%,#6a967c_51%,#4a7169_55%,#50786d_61%,#4e6f63_68%,#566e64_73%,#24423a_78%,#2b4a40_85%,#34463f_88%,#263630_100%)]">
      <button aria-label="Start" className="flex w-[54px] justify-center">
        <StartOrb />
      </button>
      <div className="ml-[6px] flex gap-1">
        <TaskButton label="Internet Explorer"><IEIcon /></TaskButton>
        <TaskButton label="Windows Explorer" open stacked><FolderIcon /></TaskButton>
        <TaskButton label="Windows Media Player"><WmpIcon /></TaskButton>
        <TaskButton label="Firefox" open><FirefoxIcon /></TaskButton>
        <TaskButton label="Chrome"><ChromeIcon /></TaskButton>
        <TaskButton label="PowerPoint" open stacked><PptIcon /></TaskButton>
        <TaskButton label="Excel" open active><ExcelLogo className="size-8" /></TaskButton>
      </div>
      <div className="ml-auto flex h-full items-center text-[11px] text-white">
        <span className="mb-1 w-[22px]">EN</span>
        <button aria-label="Language help" className="mb-1 flex size-[15px] items-center justify-center rounded-full border border-[#c9d4ee] bg-[#1520a8] text-[11px] leading-none font-bold">?</button>
        <button aria-label="Language bar options" className="mb-1 ml-[10px] flex flex-col items-center gap-[5px]">
          <svg viewBox="0 0 9 7" className="h-[7px] w-[9px]" fill="none" stroke="#fff"><path d="M3.500 .5h5v3h-5zM.5 3.500h5v3h-5z" /></svg>
          <svg viewBox="0 0 6 3" className="h-[3px] w-[6px]" fill="#fff"><path d="M0 0h6L3 3z" /></svg>
        </button>
        <button aria-label="Show hidden icons" className="ml-[11px]"><svg viewBox="0 0 8 4" className="h-1 w-2" fill="#fff"><path d="M0 4h8L4 0z" /></svg></button>
        <button aria-label="Action Center" className="ml-[12px]">
          <svg viewBox="0 0 16 16" className="size-4"><path d="M1.500 1v14" stroke="#fff" strokeWidth="1.500" /><path d="M2 2c3-1.500 4 1 8 0v7c-4 1-5-1.500-8 0z" fill="#fff" /><circle cx="11" cy="11" r="4.500" fill="#dd2a1c" /><path d="M9 9l4 4M13 9l-4 4" stroke="#fff" strokeWidth="1.400" /></svg>
        </button>
        <button aria-label="Network" className="ml-2">
          <svg viewBox="0 0 16 14" className="h-[14px] w-4" fill="#fff"><path d="M0 11h2v2H0zM3.500 9.500h2V13h-2zM7 7h2v6H7zM10.500 4.500h2V13h-2zM14 2h2v11h-2z" /></svg>
        </button>
        <button aria-label="Volume" className="ml-[10px]">
          <svg viewBox="0 0 14 14" className="size-[14px]" fill="#fff"><path d="M0 4.500h3L7 1v12L3 9.500H0z" /><path d="M9.500 4.500q2 2.500 0 5" stroke="#fff" fill="none" /></svg>
        </button>
        <button aria-label="Dropbox" className="ml-[9px]">
          <svg viewBox="0 0 16 16" className="size-4"><path d="M4.500 1L8 3.500 11.500 1 16 4l-3 2.500L16 9l-4.500 3L8 9.500 4.500 12 0 9l3-2.500L0 4z" fill="#6fc0f4" /><path d="M8 4l4 2.500L8 9 4 6.500z" fill="#d9effc" /><circle cx="12" cy="12" r="4" fill="#34a236" /><path d="M10 12l1.500 1.500L14 10.500" stroke="#fff" fill="none" /></svg>
        </button>
        <time className="w-[76px] pl-1 text-center leading-[17px]">
          <span className="block">9:33 μμ</span>
          <span className="block">18/2/2014</span>
        </time>
        <button aria-label="Show desktop" className="mr-[2px] h-full w-[21px] rounded-[2px] border border-[#6e7c78] bg-white/10" />
      </div>
    </div>
  );
}

export default function App() {
  return (
    <div className={`flex h-screen w-full flex-col overflow-hidden bg-white ${ui}`}>
      <TitleBar />
      <Tabs />
      <Ribbon />
      <FormulaBar />
      <main className={`flex min-h-0 flex-1 border-t border-[#85899a] ${arial}`}>
        <div className="relative min-w-0 flex-1 overflow-hidden">
          <Sheet />
          <Chart />
        </div>
        <VScroll />
      </main>
      <SheetTabs />
      <StatusBar />
      <Taskbar />
    </div>
  );
}
